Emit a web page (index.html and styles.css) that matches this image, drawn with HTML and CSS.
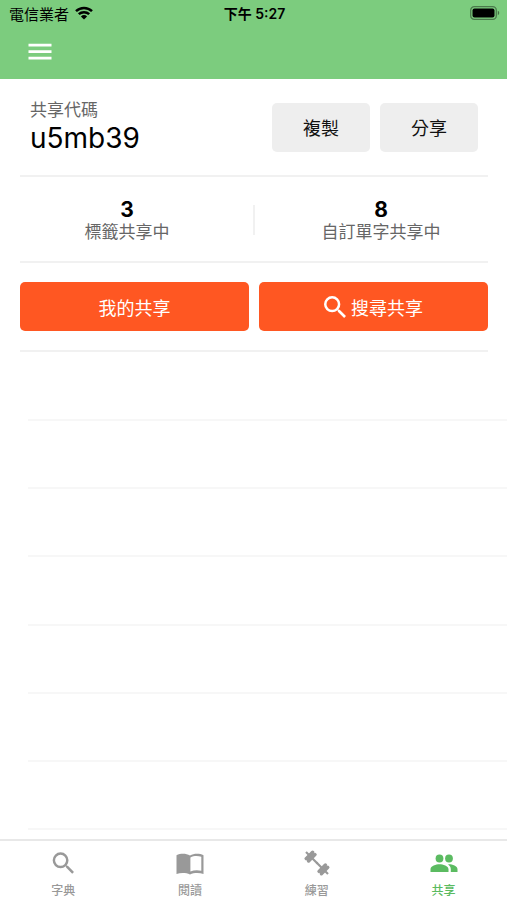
FILE: index.html
```html
<!DOCTYPE html>
<html lang="zh-Hant">
<head>
<meta charset="utf-8">
<meta name="viewport" content="width=device-width, initial-scale=1">
<title>共享</title>
<link rel="stylesheet" href="styles.css">
</head>
<body>
<header class="header">
  <div class="status">
    <div class="carrier">
      <span>電信業者</span>
      <svg class="wifi" viewBox="0 0 18 14" aria-hidden="true">
        <path d="M1 5.2a11.6 11.6 0 0 1 16 0M3.8 8.2a7.6 7.6 0 0 1 10.4 0" fill="none" stroke="#000" stroke-width="2.5"/>
        <path d="M9 13.6 5.9 10.5a4.5 4.5 0 0 1 6.2 0z"/>
      </svg>
    </div>
    <div class="clock">下午 5:27</div>
    <div class="power">
      <svg class="battery" viewBox="0 0 30 14" aria-hidden="true">
        <rect x=".7" y=".7" width="25.6" height="12.6" rx="3.6" fill="none" stroke="#000" stroke-opacity=".4" stroke-width="1.3"/>
        <rect x="2.5" y="2.5" width="22" height="9" rx="2"/>
        <path d="M27.8 4.8a2.4 2.4 0 0 1 0 4.4z" fill-opacity=".45"/>
      </svg>
    </div>
  </div>
  <button class="menu" type="button" aria-label="選單">
    <svg viewBox="0 0 24 18" aria-hidden="true"><path d="M.5.700h23v2.800H.5zM.5 7.200h23V10H.5zM.5 13.700h23v2.800H.5z"/></svg>
  </button>
</header>

<main class="main">
  <section class="code-row">
    <div class="code">
      <div class="label">共享代碼</div>
      <div class="code-value">u5mb39</div>
    </div>
    <div class="code-actions">
      <button class="btn btn-plain" type="button">複製</button>
      <button class="btn btn-plain" type="button">分享</button>
    </div>
  </section>
  <section class="stats">
    <div class="stat-group">
      <div class="stat">
        <div class="count">3</div>
        <div class="label">標籤共享中</div>
      </div>
      <div class="stat">
        <div class="count">8</div>
        <div class="label">自訂單字共享中</div>
      </div>
    </div>
  </section>
  <section class="actions">
    <button class="btn btn-primary" type="button">我的共享</button>
    <button class="btn btn-primary" type="button">
      <svg class="search" viewBox="3 3 17.5 17.5" aria-hidden="true"><path d="M15.5 14h-.79l-.28-.27A6.47 6.47 0 0 0 16 9.5 6.5 6.5 0 1 0 9.5 16c1.61 0 3.09-.59 4.23-1.57l.27.28v.79l5 4.99L20.49 19zm-6 0a4.5 4.5 0 1 1 0-9 4.5 4.5 0 0 1 0 9z"/></svg>
      搜尋共享
    </button>
  </section>
  <ul class="list">
    <li></li><li></li><li></li><li></li><li></li><li></li><li></li>
  </ul>
</main>

<nav class="tabs">
  <a class="tab" href="#dictionary">
    <svg viewBox="0 0 28 28" aria-hidden="true"><path transform="translate(0 -1.3) scale(1.22)" d="M15.5 14h-.79l-.28-.27A6.47 6.47 0 0 0 16 9.5 6.5 6.5 0 1 0 9.5 16c1.61 0 3.09-.59 4.23-1.57l.27.28v.79l5 4.99L20.49 19zm-6 0a4.5 4.5 0 1 1 0-9 4.5 4.5 0 0 1 0 9z"/></svg>
    字典
  </a>
  <a class="tab" href="#reading">
    <svg viewBox="0 0 28 28" aria-hidden="true"><path fill-rule="evenodd" d="M.5 5.200C4.500 3.200 10 3.200 14 5.400c4-2.200 9.500-2.200 13.500-.2V24c-4-1.500-9.500-1.500-13.500.4C10 22.500 4.500 22.500.5 24zM14.400 7.500v14c3.500-1.400 7.300-1.500 10.900-.7V6.800c-3.600-1.200-7.500-1.100-10.900.7z"/></svg>
    閱讀
  </a>
  <a class="tab" href="#practice">
    <svg viewBox="0 0 28 28" aria-hidden="true">
      <g id="half">
        <path d="M6 5 14.500 13.500" stroke="currentColor" stroke-width="2.200"/>
        <path d="M3.200 8.600 9.600 2.200M5.600 11 12 4.600" stroke="currentColor" stroke-width="3.400" stroke-linecap="round"/>
        <path d="m3 2 4 4" stroke="currentColor" stroke-width="2.200"/>
      </g>
      <use href="#half" transform="rotate(180 14 13)"/>
    </svg>
    練習
  </a>
  <a class="tab active" href="#share" aria-current="page">
    <svg viewBox="0 0 28 28" aria-hidden="true"><circle cx="9.500" cy="8.500" r="3.900"/><circle cx="19" cy="8.500" r="3.900"/><path d="M.5 22v-2.700c0-3.400 5.600-5 9-5s9 1.600 9 5V22zM18.800 14.300c3.600 0 8.700 1.700 8.700 5V22h-6.700v-2.700c0-2.200-1.100-3.800-2.700-4.900z"/></svg>
    共享
  </a>
</nav>
</body>
</html>
```

FILE: styles.css
```css
* {
  box-sizing: border-box;
}

body {
  margin: 0;
  min-height: 100vh;
  display: flex;
  flex-direction: column;
  background: #fff;
  color: #000;
  font-family: Inter, "Noto Sans CJK TC", sans-serif;
}

svg {
  display: block;
  flex-shrink: 0;
  fill: currentColor;
}

button {
  font-family: inherit;
  border: 0;
  padding: 0;
  cursor: pointer;
}

.header {
  background: #7ccc7e;
  padding-bottom: 9px;
}

.status {
  display: grid;
  grid-template-columns: 1fr auto 1fr;
  align-items: center;
  height: 26px;
  padding: 0 7px 0 9px;
  font-size: 15px;
  font-weight: 400;
}

.carrier {
  display: flex;
  align-items: center;
  gap: 6px;
}

.clock {
  font-size: 14px;
  font-weight: 600;
}

.wifi {
  width: 18px;
  height: 14px;
}

.power {
  display: flex;
  justify-content: flex-end;
}

.battery {
  width: 30px;
  height: 14px;
}

.menu {
  display: block;
  margin: 8px 0 0 20px;
  padding: 9px 8px;
  height: 36px;
  background: none;
  color: #fff;
}

.menu svg {
  width: 24px;
  height: 18px;
}

.main {
  flex: 1;
  display: flex;
  flex-direction: column;
}

.code-row,
.stats,
.actions {
  margin: 0 19px 0 20px;
  border-bottom: 2px solid #f1f1f1;
}

.code-row {
  display: flex;
  justify-content: space-between;
  align-items: center;
  height: 98px;
  padding: 0 10px;
}

.label {
  font-size: 17px;
  line-height: 22px;
  color: #666;
}

.code-value {
  font-size: 28px;
  line-height: 34px;
}

.code-actions {
  display: flex;
  gap: 10px;
}

.btn {
  height: 49px;
  border-radius: 5px;
  font-size: 18px;
}

.btn-plain {
  width: 98px;
  background: #eee;
  color: #111;
}

.stats {
  height: 86px;
  padding-top: 22px;
}

.stat-group {
  display: flex;
  margin: 0 -20px;
}

.stat {
  flex: 1;
  text-align: center;
}

.stat + .stat {
  position: relative;
}

.stat + .stat::before {
  content: "";
  position: absolute;
  left: -1px;
  top: 6px;
  width: 2px;
  height: 30px;
  background: #f1f1f1;
}

.count {
  font-size: 21px;
  line-height: 22px;
  font-weight: 700;
}

.actions {
  display: flex;
  gap: 10px;
  padding: 19px 0;
}

.btn-primary {
  flex: 1;
  display: flex;
  align-items: center;
  justify-content: center;
  gap: 5px;
  background: #ff5722;
  color: #fff;
}

.search {
  width: 22px;
  height: 22px;
}

.list {
  flex: 1;
  display: flex;
  flex-direction: column;
  margin: 0;
  padding: 1px 0 9px 28px;
  list-style: none;
}

.list li {
  flex: 1;
  border-bottom: 2px solid #f7f7f7;
}

.tabs {
  display: flex;
  height: 61px;
  padding-top: 9px;
  border-top: 2px solid #e8e8e8;
}

.tab {
  flex: 1;
  display: flex;
  flex-direction: column;
  align-items: center;
  color: #999;
  font-size: 12px;
  line-height: 18px;
  font-weight: 500;
  text-decoration: none;
}

.tab svg {
  width: 28px;
  height: 28px;
  margin-bottom: 4px;
}

.tab.active {
  color: #5bbb61;
}
```
